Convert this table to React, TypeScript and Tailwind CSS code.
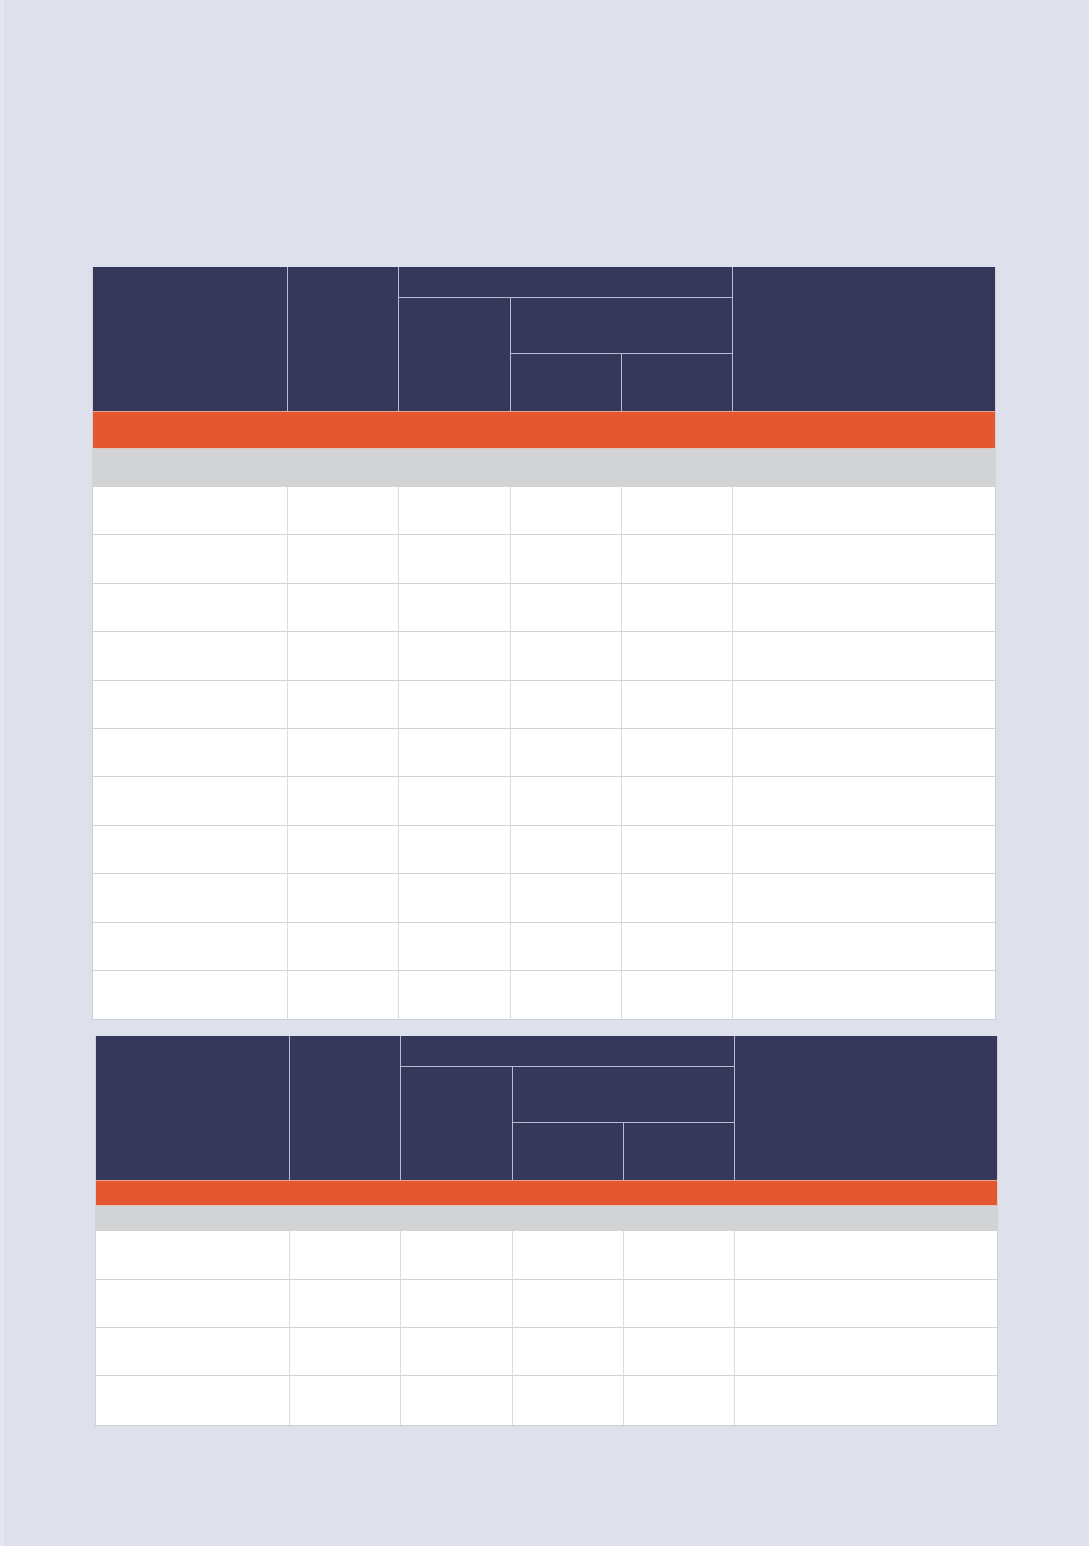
import React from "react";

const hb = "border-[#b9bbd2]";

function Header() {
  return (
    <div className="grid h-[144px] grid-cols-[var(--cols)] grid-rows-[31px_56px_57px] bg-[#35375b]">
      <div className={`row-span-3 border-r ${hb}`} />
      <div className={`row-span-3 border-r ${hb}`} />
      <div className={`col-span-3 border-r border-b ${hb}`} />
      <div className={`row-span-3 row-start-1 col-start-6`} />
      <div className={`row-span-2 col-start-3 row-start-2 border-r ${hb}`} />
      <div className={`col-span-2 col-start-4 row-start-2 border-r border-b ${hb}`} />
      <div className={`col-start-4 row-start-3 border-r ${hb}`} />
      <div className={`col-start-5 row-start-3 border-r ${hb}`} />
    </div>
  );
}

function Row() {
  return (
    <div className="grid h-[48.4px] grid-cols-[var(--cols)] border-b border-[#d3d3d7] bg-white last:border-b-0">
      <div className="border-r border-[#dcdcdf]" />
      <div className="border-r border-[#dcdcdf]" />
      <div className="border-r border-[#dcdcdf]" />
      <div className="border-r border-[#dcdcdf]" />
      <div className="border-r border-[#dcdcdf]" />
      <div />
    </div>
  );
}

function Table({
  cols,
  width,
  orange,
  gray,
  rows,
}: {
  cols: string;
  width: string;
  orange: string;
  gray: string;
  rows: number;
}) {
  return (
    <div
      className={`${width} border-x border-b border-[#cfd0d6]`}
      style={{ ["--cols" as string]: cols } as React.CSSProperties}
    >
      <Header />
      <div className={`${orange} border-t border-[#e9a58f] bg-[#e5582f]`} />
      <div className={`${gray} border-t border-[#e3c2b8] bg-[#d2d3d5]`} />
      <div className="flex flex-col">
        {Array.from({ length: rows }).map((_, i) => (
          <Row key={i} />
        ))}
      </div>
    </div>
  );
}

export default function App() {
  return (
    <div
      className="min-h-[1546px] w-full border-l-4 border-l-[#e4e6f0] bg-[#dee0eb] pt-[267px]"
      style={{ fontFamily: '"Liberation Sans", Arial, sans-serif' }}
    >
      <div className="ml-[88px]">
        <Table
          cols="195px 111px 112px 111px 111px 1fr"
          width="w-[904px]"
          orange="h-[37px]"
          gray="h-[39px]"
          rows={11}
        />
      </div>
      <div className="ml-[91px] mt-[16px]">
        <Table
          cols="194px 111px 112px 111px 111px 1fr"
          width="w-[903px]"
          orange="h-[25px]"
          gray="h-[26px]"
          rows={4}
        />
      </div>
    </div>
  );
}
